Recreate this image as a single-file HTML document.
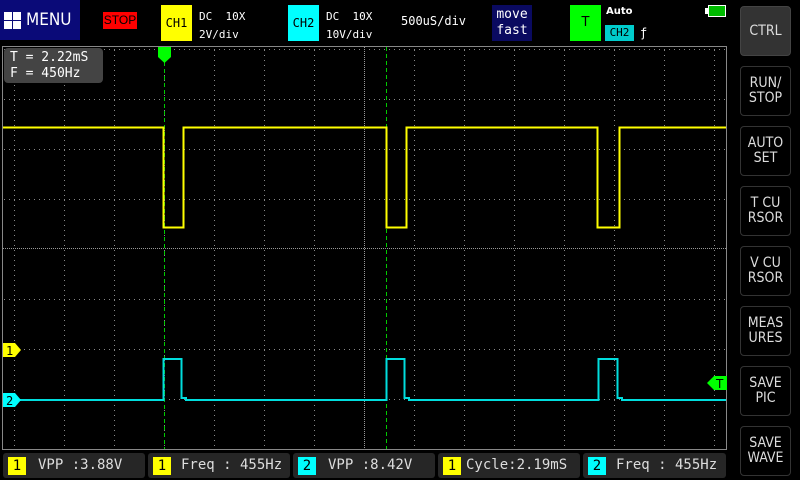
<!DOCTYPE html>
<html><head><meta charset="utf-8"><style>
*{margin:0;padding:0;box-sizing:border-box}
body{width:800px;height:480px;background:#000;overflow:hidden;position:relative;font-family:"DejaVu Sans Mono","Liberation Mono",monospace;color:#fff}
.a{position:absolute}
.btn{position:absolute;left:740px;width:51px;height:50px;border:1px solid #333;border-radius:4px;color:#ddd;font-family:"DejaVu Sans Condensed","DejaVu Sans",sans-serif;font-size:14px;line-height:15px;text-align:center;display:flex;align-items:center;justify-content:center}
.m{position:absolute;top:453px;height:25px;background:#262626;border-radius:3px;font-size:14px;line-height:25px;color:#ddd}
.m i{position:absolute;left:5px;top:4px;width:18px;height:18px;font-style:normal;color:#000;text-align:center;line-height:18px;font-size:14px}
.m span{position:absolute;top:0;white-space:pre}
</style></head><body>
<div class="a" style="left:0;top:0;width:80px;height:40px;background:#0a0a78"></div>
<div class="a" style="left:4px;top:12px;width:8px;height:8px;background:#fff"></div>
<div class="a" style="left:13px;top:12px;width:8px;height:8px;background:#fff"></div>
<div class="a" style="left:4px;top:21px;width:8px;height:8px;background:#fff"></div>
<div class="a" style="left:13px;top:21px;width:8px;height:8px;background:#fff"></div>
<div class="a" style="left:26px;top:8px;font-family:'DejaVu Sans Condensed','DejaVu Sans',sans-serif;font-size:17px;line-height:24px">MENU</div>
<div class="a" style="left:103px;top:12px;width:34px;height:17px;background:#f00;color:#000;font-family:'Liberation Sans Narrow','Liberation Sans',sans-serif;font-size:12px;line-height:17px;text-align:center;overflow:hidden">STOP</div>
<div class="a" style="left:161px;top:5px;width:31px;height:36px;background:#ff0;color:#000;font-size:12px;line-height:36px;text-align:center">CH1</div>
<div class="a" style="left:199px;top:8px;font-size:11px;line-height:18px">DC&nbsp;&nbsp;10X<br>2V/div</div>
<div class="a" style="left:288px;top:5px;width:31px;height:36px;background:#0ff;color:#000;font-size:12px;line-height:36px;text-align:center">CH2</div>
<div class="a" style="left:326px;top:8px;font-size:11px;line-height:18px">DC&nbsp;&nbsp;10X<br>10V/div</div>
<div class="a" style="left:401px;top:14px;font-size:12px">500uS/div</div>
<div class="a" style="left:492px;top:5px;width:40px;height:36px;background:#0a0a60;font-size:13px;line-height:16px;text-align:center;padding-top:2px">move<br>fast</div>
<div class="a" style="left:570px;top:5px;width:31px;height:36px;background:#0f0;color:#000;font-family:'DejaVu Sans',sans-serif;font-size:13px;line-height:36px;text-align:center">T</div>
<div class="a" style="left:606px;top:6px;font-family:'DejaVu Sans',sans-serif;font-size:10px;font-weight:bold">Auto</div>
<div class="a" style="left:605px;top:25px;width:29px;height:16px;background:#0cc;color:#000;font-size:11px;line-height:16px;text-align:center">CH2</div>
<div class="a" style="left:640px;top:25px;font-size:12px;line-height:16px">ƒ</div>
<div class="a" style="left:705px;top:8px;width:3px;height:6px;background:#fff"></div>
<div class="a" style="left:708px;top:5px;width:18px;height:12px;background:#0b0;border:1px solid #fff"></div>
<div class="btn" style="top:6px;background:#333;border-color:#444">CTRL</div>
<div class="btn" style="top:66px">RUN/<br>STOP</div>
<div class="btn" style="top:126px">AUTO<br>SET</div>
<div class="btn" style="top:186px">T CU<br>RSOR</div>
<div class="btn" style="top:246px">V CU<br>RSOR</div>
<div class="btn" style="top:306px">MEAS<br>URES</div>
<div class="btn" style="top:366px">SAVE<br>PIC</div>
<div class="btn" style="top:426px">SAVE<br>WAVE</div>
<svg class="a" style="left:0;top:0" width="800" height="480">
<rect x="2.5" y="46.5" width="724" height="403" fill="none" stroke="#888"/>
<g stroke="#888" stroke-dasharray="1 4" stroke-width="1">
<path d="M14.5 50V449M64.5 50V449M114.5 50V449M164.5 50V449M214.5 50V449M264.5 50V449M314.5 50V449M414.5 50V449M464.5 50V449M514.5 50V449M564.5 50V449M614.5 50V449M664.5 50V449M714.5 50V449"/>
<path d="M4 49.5H726M4 99.5H726M4 149.5H726M4 199.5H726M4 299.5H726M4 349.5H726M4 399.5H726"/>
</g>
<g stroke="#999" stroke-dasharray="1 1"><path d="M364.5 47V449M3 248.5H726"/></g>
<g stroke="#0c0" stroke-dasharray="4 3"><path d="M164.5 62V449M386.5 47V449"/></g>
<path d="M158 47H171V57L164.5 63L158 57Z" fill="#0f0"/>
<path d="M3 127.5H163.5V227.5H183.5V127.5H386.5V227.5H406.5V127.5H597.5V227.5H619.5V127.5H726" fill="none" stroke="#ff0" stroke-width="2"/>
<path d="M3 400H163.5V359H181.5V398H186V400H386.5V359H404.5V398H409V400H598.5V359H617.5V398H622V400H726" fill="none" stroke="#0dd" stroke-width="2"/>
<path d="M3 343H15L21 350L15 357H3Z" fill="#ff0"/><text x="6" y="355" font-size="12" fill="#000" font-family="DejaVu Sans Mono">1</text>
<path d="M3 393H15L21 400L15 407H3Z" fill="#0ff"/><text x="6" y="405" font-size="12" fill="#000" font-family="DejaVu Sans Mono">2</text>
<path d="M727 376H714L707 383L714 390H727Z" fill="#0f0"/><text x="716" y="388" font-size="12" fill="#000" font-family="DejaVu Sans">T</text>
</svg>
<div class="a" style="left:4px;top:48px;width:99px;height:35px;background:#444;border-radius:4px;font-size:13px;line-height:16px;padding:2px 0 0 6px;white-space:pre">T = 2.22mS
F = 450Hz</div>
<div class="m" style="left:3px;width:142px"><i style="background:#ff0">1</i><span style="left:35px">VPP :3.88V</span></div>
<div class="m" style="left:148px;width:142px"><i style="background:#ff0">1</i><span style="left:33px">Freq : 455Hz</span></div>
<div class="m" style="left:293px;width:142px"><i style="background:#0ff">2</i><span style="left:35px">VPP :8.42V</span></div>
<div class="m" style="left:438px;width:142px"><i style="background:#ff0">1</i><span style="left:28px">Cycle:2.19mS</span></div>
<div class="m" style="left:583px;width:143px"><i style="background:#0ff">2</i><span style="left:33px">Freq : 455Hz</span></div>
</body></html>
